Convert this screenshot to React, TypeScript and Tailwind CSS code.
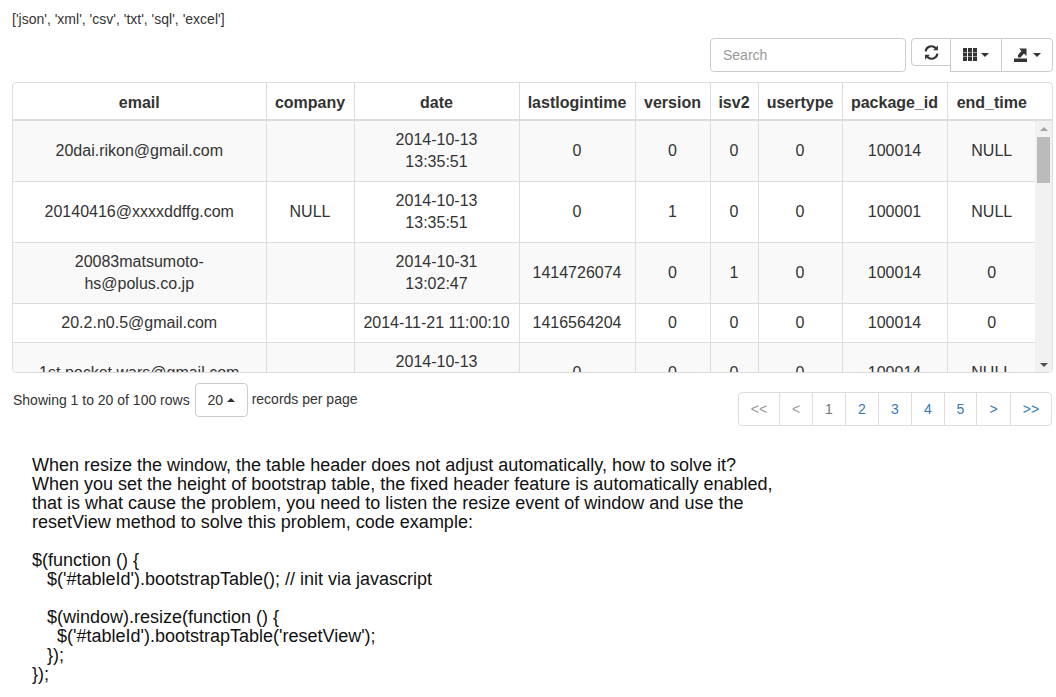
const cols = [253, 88, 165, 116, 75, 48, 84, 105, 89];
const heads = ["email", "company", "date", "lastlogintime", "version", "isv2", "usertype", "package_id", "end_time"];

const rows = [
  [<>20dai.rikon@gmail.com</>, "", <>2014-10-13<br />13:35:51</>, "0", "0", "0", "0", "100014", "NULL"],
  [<>20140416@xxxxddffg.com</>, "NULL", <>2014-10-13<br />13:35:51</>, "0", "1", "0", "0", "100001", "NULL"],
  [<>20083matsumoto-<br />hs@polus.co.jp</>, "", <>2014-10-31<br />13:02:47</>, "1414726074", "0", "1", "0", "100014", "0"],
  [<>20.2.n0.5@gmail.com</>, "", <>2014-11-21 11:00:10</>, "1416564204", "0", "0", "0", "100014", "0"],
  [<>1st.pocket.wars@gmail.com</>, "", <>2014-10-13<br />13:35:51</>, "0", "0", "0", "0", "100014", "NULL"],
];

const pages = [
  { label: "<<", cls: "w-[40px] text-[#999]" },
  { label: "<", cls: "w-[33px] border-l text-[#999]" },
  { label: "1", cls: "w-[33px] border-l text-[#777]" },
  { label: "2", cls: "w-[33px] border-l text-[#337ab7]" },
  { label: "3", cls: "w-[33px] border-l text-[#337ab7]" },
  { label: "4", cls: "w-[33px] border-l text-[#337ab7]" },
  { label: "5", cls: "w-[32px] border-l text-[#337ab7]" },
  { label: ">", cls: "w-[34px] border-l text-[#337ab7]" },
  { label: ">>", cls: "w-[41px] border-l text-[#337ab7]" },
];

function Caret({ up, color = "#333" }: { up?: boolean; color?: string }) {
  return (
    <span
      className={`inline-block h-0 w-0 border-x-4 border-x-transparent ${up ? "border-b-4" : "border-t-4"}`}
      style={up ? { borderBottomColor: color } : { borderTopColor: color }}
    />
  );
}

function Colgroup({ last }: { last: number }) {
  return (
    <colgroup>
      {cols.map((w, i) => (
        <col key={i} style={{ width: i === cols.length - 1 ? last : w }} />
      ))}
    </colgroup>
  );
}

export default function App() {
  return (
    <div className="h-[697px] overflow-hidden bg-white px-3 font-['Liberation_Sans',sans-serif] text-[16px] text-[#333]">
      <p className="pt-[10px] text-[14px] leading-[18px]">['json', 'xml', 'csv', 'txt', 'sql', 'excel']</p>

      <div className="mt-[10px] flex w-[1041px] items-start justify-end">
        <input
          placeholder="Search"
          className="mr-[5px] h-[34px] w-[196px] rounded border border-[#ccc] px-3 text-[14px] outline-none placeholder:text-[#999]"
        />
        <div className="flex items-start">
          <button className="flex h-[28px] w-[40px] items-center justify-center rounded-l border border-[#ccc] bg-white">
            <svg width="15" height="15" viewBox="0 0 14 14" fill="none" stroke="#333" strokeWidth="2">
              <path d="M1.500 6 A5.500 5.500 0 0 1 11 3" />
              <path d="M12.500 8 A5.500 5.500 0 0 1 3 11" />
              <path d="M13 0.500 V5 H8.500 Z" fill="#333" stroke="none" />
              <path d="M1 13.500 V9 H5.500 Z" fill="#333" stroke="none" />
            </svg>
          </button>
          <button className="-ml-px flex h-[34px] w-[52px] items-center justify-center gap-[4px] border border-[#ccc] bg-white">
            <svg width="14" height="14" viewBox="0 0 14 14" fill="#333">
              <path d="M0 0h4v4H0zM5 0h4v4H5zM10 0h4v4h-4zM0 4.500h4v4H0zM5 4.500h4v4H5zM10 4.500h4v4h-4zM0 9h4v4H0zM5 9h4v4H5zM10 9h4v4h-4z" />
            </svg>
            <Caret />
          </button>
          <button className="-ml-px flex h-[34px] w-[52px] items-center justify-center gap-[5px] rounded-r border border-[#ccc] bg-white">
            <svg width="14" height="15" viewBox="0 0 14 15" fill="#333">
              <path d="M0 10.500h13V14H0z" />
              <path d="M5 0.500h7.500V8L10 5.500 6.500 9.500 4 9.500V7L7.500 3z" />
            </svg>
            <Caret />
          </button>
        </div>
      </div>

      <div className="mt-[10px] h-[291px] w-[1041px] overflow-hidden rounded border border-[#ddd]">
        <table className="w-full table-fixed border-collapse">
          <Colgroup last={106} />
          <thead>
            <tr className="h-[37px] border-b-2 border-[#ddd]">
              {heads.map((h, i) => (
                <th key={h} className={`p-0 pt-[3px] text-center font-bold ${i === heads.length - 1 ? "pr-[17px]" : "border-r border-[#ddd]"}`}>
                  {h}
                </th>
              ))}
            </tr>
          </thead>
        </table>
        <div className="flex h-[252px]">
          <div className="w-[1023px] overflow-hidden">
            <table className="w-full table-fixed border-collapse">
              <Colgroup last={89} />
              <tbody>
                {rows.map((row, r) => (
                  <tr key={r} className={`border-b border-[#ddd] ${r % 2 === 0 ? "bg-[#f9f9f9]" : ""}`}>
                    {row.map((cell, c) => (
                      <td key={c} className={`p-2 text-center leading-[22px] ${c < row.length - 1 ? "border-r border-[#ddd]" : ""}`}>
                        {cell}
                      </td>
                    ))}
                  </tr>
                ))}
              </tbody>
            </table>
          </div>
          <div className="flex w-[17px] flex-col bg-[#f1f1f1]">
            <div className="flex h-[16px] items-center justify-center"><Caret up color="#a3a3a3" /></div>
            <div className="mx-[2px] h-[46px] bg-[#bbb]" />
            <div className="mt-auto flex h-[17px] items-center justify-center"><Caret color="#505050" /></div>
          </div>
        </div>
      </div>

      <div className="flex w-[1041px] items-start justify-between text-[14px]">
        <div className="mt-[10px] flex items-start">
          <span className="ml-px mt-[7px] leading-[20px]">Showing 1 to 20 of 100 rows</span>
          <button className="ml-[5px] flex h-[34px] w-[53px] items-center justify-center gap-[4px] rounded border border-[#ccc] bg-white">
            20 <Caret up />
          </button>
          <span className="ml-[4px] mt-[6px] leading-[20px]">records per page</span>
        </div>
        <div className="mr-px mt-[19px] flex h-[34px] overflow-hidden rounded border border-[#ddd]">
          {pages.map((p) => (
            <span key={p.label} className={`flex items-center justify-center border-[#ddd] ${p.cls}`}>
              {p.label}
            </span>
          ))}
        </div>
      </div>

      <pre className="mt-[30px] pl-5 font-['Liberation_Sans',sans-serif] text-[18px] leading-[19px] text-[#111]">
{`When resize the window, the table header does not adjust automatically, how to solve it?
When you set the height of bootstrap table, the fixed header feature is automatically enabled,
that is what cause the problem, you need to listen the resize event of window and use the
resetView method to solve this problem, code example:

$(function () {
   $('#tableId').bootstrapTable(); // init via javascript

   $(window).resize(function () {
     $('#tableId').bootstrapTable('resetView');
   });
});`}
      </pre>
    </div>
  );
}
